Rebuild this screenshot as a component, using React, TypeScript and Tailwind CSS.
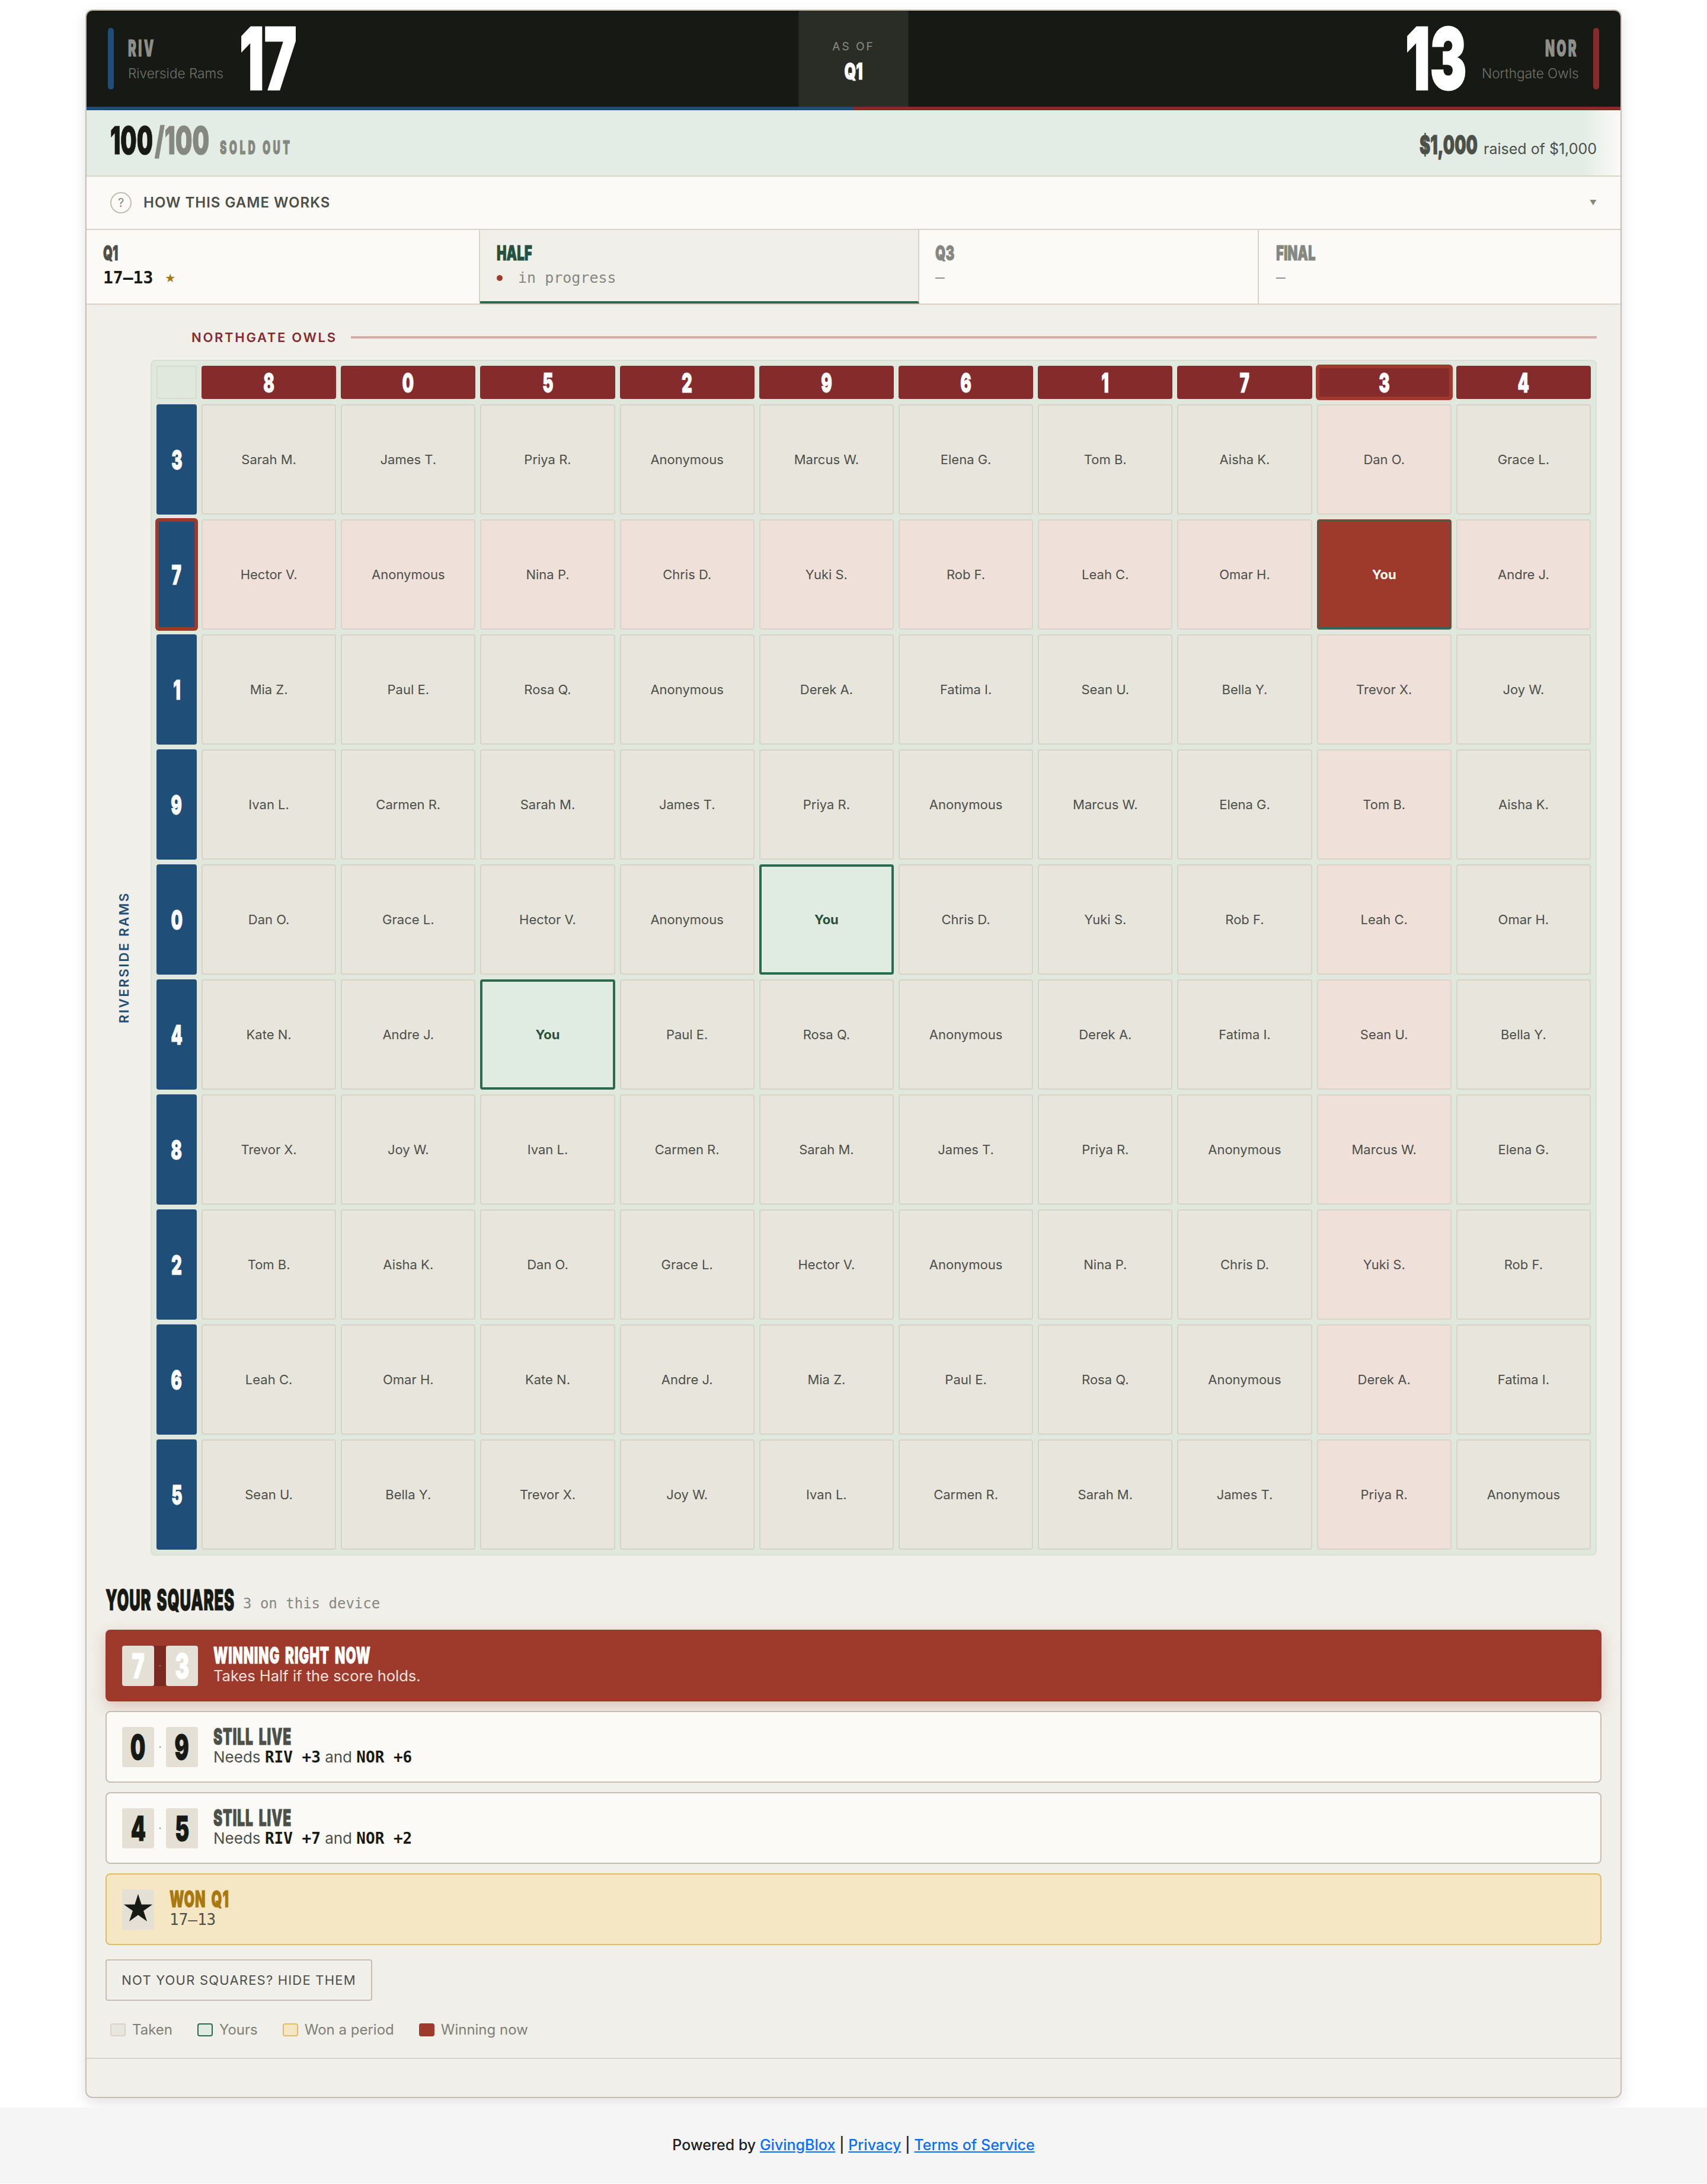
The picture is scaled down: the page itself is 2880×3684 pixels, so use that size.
const ANTON = "inline-block whitespace-nowrap font-['Inter'] font-black leading-none [-webkit-text-stroke:1px]"
const MONO = "font-['DejaVu_Sans_Mono']"

const AWAY = [8, 0, 5, 2, 9, 6, 1, 7, 3, 4]
const HOME = [3, 7, 1, 9, 0, 4, 8, 2, 6, 5]
const NAMES = [
  ['Sarah M.', 'James T.', 'Priya R.', 'Anonymous', 'Marcus W.', 'Elena G.', 'Tom B.', 'Aisha K.', 'Dan O.', 'Grace L.'],
  ['Hector V.', 'Anonymous', 'Nina P.', 'Chris D.', 'Yuki S.', 'Rob F.', 'Leah C.', 'Omar H.', 'You', 'Andre J.'],
  ['Mia Z.', 'Paul E.', 'Rosa Q.', 'Anonymous', 'Derek A.', 'Fatima I.', 'Sean U.', 'Bella Y.', 'Trevor X.', 'Joy W.'],
  ['Ivan L.', 'Carmen R.', 'Sarah M.', 'James T.', 'Priya R.', 'Anonymous', 'Marcus W.', 'Elena G.', 'Tom B.', 'Aisha K.'],
  ['Dan O.', 'Grace L.', 'Hector V.', 'Anonymous', 'You', 'Chris D.', 'Yuki S.', 'Rob F.', 'Leah C.', 'Omar H.'],
  ['Kate N.', 'Andre J.', 'You', 'Paul E.', 'Rosa Q.', 'Anonymous', 'Derek A.', 'Fatima I.', 'Sean U.', 'Bella Y.'],
  ['Trevor X.', 'Joy W.', 'Ivan L.', 'Carmen R.', 'Sarah M.', 'James T.', 'Priya R.', 'Anonymous', 'Marcus W.', 'Elena G.'],
  ['Tom B.', 'Aisha K.', 'Dan O.', 'Grace L.', 'Hector V.', 'Anonymous', 'Nina P.', 'Chris D.', 'Yuki S.', 'Rob F.'],
  ['Leah C.', 'Omar H.', 'Kate N.', 'Andre J.', 'Mia Z.', 'Paul E.', 'Rosa Q.', 'Anonymous', 'Derek A.', 'Fatima I.'],
  ['Sean U.', 'Bella Y.', 'Trevor X.', 'Joy W.', 'Ivan L.', 'Carmen R.', 'Sarah M.', 'James T.', 'Priya R.', 'Anonymous'],
]

function cellClass(r: number, c: number, name: string) {
  if (name === 'You' && r === 1) {
    return 'border border-[#9e3a2c] bg-[#9e3a2c] font-bold text-white shadow-[inset_0_0_0_3px_#2f6b50]'
  }
  if (name === 'You') return 'border-4 border-[#2a6a4f] bg-[#e0ebe2] font-bold text-[#25513f]'
  if (r === 1 || c === 8) return 'border-2 border-[#dcd3c9] bg-[#f0e0da] text-[#4c5049]'
  return 'border-2 border-[#d8d3c8] bg-[#e8e5dd] text-[#4c5049]'
}

function Board() {
  return (
    <div className="grid grid-cols-[68px_repeat(10,1fr)] grid-rows-[57px_repeat(10,186px)] gap-2 rounded-lg border-2 border-[#d6e0d4] bg-[#e0e8de] p-2">
      <div className="mb-px rounded border-2 border-[#d4dccf] bg-[#e0e8de]" />
      {AWAY.map((d, c) => (
        <div
          key={c}
          className={
            c === 8
              ? 'mb-px flex items-center justify-center rounded bg-[#862b2b] shadow-[0_0_0_2px_#9e3a2c,inset_0_0_0_4px_#9e3a2c]'
              : 'mb-px flex items-center justify-center rounded bg-[#862b2b]'
          }
        >
          <span className={`${ANTON} scale-x-[0.6] text-[46px] text-white`}>{d}</span>
        </div>
      ))}
      {HOME.map((d, r) => (
        <div key={d} className="contents">
          <div
            className={
              r === 1
                ? 'flex items-center justify-center rounded bg-[#1f4e79] shadow-[0_0_0_2px_#9e3a2c,inset_0_0_0_4px_#9e3a2c]'
                : 'flex items-center justify-center rounded bg-[#1f4e79]'
            }
          >
            <span className={`${ANTON} scale-x-[0.6] text-[46px] text-white`}>{d}</span>
          </div>
          {NAMES[r].map((name, c) => (
            <div key={c} className={`flex items-center justify-center rounded text-[22px] ${cellClass(r, c, name)}`}>
              {name}
            </div>
          ))}
        </div>
      ))}
    </div>
  )
}

function Tile({ d, win }: { d: string; win?: boolean }) {
  return (
    <div className="flex h-[68px] w-[54px] items-center justify-center rounded bg-[#e4e0d6]">
      <span className={`${ANTON} scale-x-[0.62] text-[58px] ${win ? 'text-white' : 'text-[#171a14]'}`}>{d}</span>
    </div>
  )
}

function Pair({ a, b, win }: { a: string; b: string; win?: boolean }) {
  return (
    <div className="flex shrink-0 items-stretch">
      <Tile d={a} win={win} />
      <div className={`flex w-5 items-center justify-center text-[18px] text-[#7d8076] ${win ? 'bg-[#7a2a20]' : ''}`}>·</div>
      <Tile d={b} win={win} />
    </div>
  )
}

function Needs({ riv, nor }: { riv: string; nor: string }) {
  const mono = `${MONO} font-bold text-[#171a14]`
  return (
    <div className="text-[26px] leading-[30px] text-[#4c5049]">
      Needs <span className={mono}>RIV {riv}</span> and <span className={mono}>NOR {nor}</span>
    </div>
  )
}

function Legend({ swatch, label }: { swatch: string; label: string }) {
  return (
    <div className="flex items-center gap-[11px]">
      <span className={`h-[22px] w-[26px] rounded ${swatch}`} />
      <span>{label}</span>
    </div>
  )
}

function Scoreboard() {
  return (
    <div className="relative flex h-[168px] items-stretch justify-between rounded-t-[10px] border-b-[6px] border-[#862b2b] bg-[#171a14]">
      {/* two tone rule under the score, blue half sits over the red border */}
      <div className="absolute bottom-[-6px] left-0 h-[6px] w-1/2 bg-[#1f4e79]" />
      <div className="flex items-center pl-[36px]">
        <div className="h-[104px] w-[10px] rounded-full bg-[#1f4e79]" />
        <div className="ml-[24px] w-[188px]">
          <span className={`${ANTON} origin-left scale-x-[0.55] text-[38px] tracking-[6px] text-[#8f908b]`}>RIV</span>
          <div className="mt-[10px] text-[22.6px] font-light leading-[26px] text-[#6f726a]">Riverside Rams</div>
        </div>
        <span className={`${ANTON} origin-left scale-x-[0.64] text-[144px] text-white [-webkit-text-stroke:3px]`}>17</span>
      </div>
      <div className="absolute inset-y-0 left-1/2 flex w-[185px] -translate-x-1/2 flex-col items-center justify-center bg-[#2a2c26] pt-[8px]">
        <span className="text-[19px] leading-[24px] tracking-[3px] text-[#8a8c85]">AS OF</span>
        <span className={`${ANTON} mt-[10px] scale-x-[0.66] text-[38px] text-white`}>Q1</span>
      </div>
      <div className="flex items-center pr-[36px]">
        <span className={`${ANTON} origin-right scale-x-[0.64] text-[144px] text-white [-webkit-text-stroke:3px]`}>13</span>
        <div className="ml-[26px] w-[163px] text-right">
          <span className={`${ANTON} origin-right scale-x-[0.55] text-[38px] tracking-[6px] text-[#8f908b]`}>NOR</span>
          <div className="mt-[10px] whitespace-nowrap text-[22.6px] font-light leading-[26px] text-[#6f726a]">Northgate Owls</div>
        </div>
        <div className="ml-[25px] h-[104px] w-[10px] rounded-full bg-[#862b2b]" />
      </div>
    </div>
  )
}

export default function App() {
  return (
    <div className="bg-white font-['Inter',sans-serif]">
      <div className="px-[144px] pb-4 pt-4">
        <div className="rounded-[12px] border-2 border-[#c4bdb0] bg-[#f1efe9] shadow-[0_8px_24px_rgba(0,0,0,0.12)]">
          <Scoreboard />

          {/* sold count */}
          <div className="flex h-[112px] items-center justify-between border-b-2 border-[#d8d3c8] bg-[linear-gradient(90deg,#e3ede5_97.6%,#fbfaf6)] pb-[8px] pl-[40px] pr-[40px]">
            <div className="flex items-baseline">
              <span className={`${ANTON} w-[75px] origin-left scale-x-[0.6] text-[64px] text-[#171a14]`}>100</span>
              <span className={`${ANTON} w-[110px] origin-left scale-x-[0.63] text-[64px] text-[#858880]`}>/100</span>
              <span className={`${ANTON} origin-left scale-x-[0.55] text-[31px] tracking-[8px] text-[#858880]`}>SOLD OUT</span>
            </div>
            <div className="flex items-baseline pt-[14px]">
              <span className={`${ANTON} w-[108px] origin-left scale-x-[0.62] text-[44px] text-[#4c5049]`}>$1,000</span>
              <span className="text-[25px] leading-[30px] text-[#4c5049]">raised of $1,000</span>
            </div>
          </div>

          {/* explainer toggle */}
          <div className="flex h-[90px] items-center justify-between border-b-2 border-[#d8d3c8] bg-[#fbfaf6] pl-[40px] pr-[40px]">
            <div className="flex items-center gap-5">
              <span className="flex h-[36px] w-[36px] items-center justify-center rounded-full border-2 border-[#c4bdb0] text-[20px] text-[#858880]">?</span>
              <span className="text-[24px] font-semibold tracking-[1px] text-[#4c5049]">HOW THIS GAME WORKS</span>
            </div>
            <span className="text-[12px] text-[#858880]">▼</span>
          </div>

          {/* periods */}
          <div className="grid h-[126px] grid-cols-[664px_741px_573px_1fr] border-b-2 border-[#d8d3c8] bg-[#fbfaf6]">
            <div className="border-r-2 border-[#d8d3c8] pl-[28px] pt-[22px]">
              <span className={`${ANTON} origin-left scale-x-[0.6] text-[34px] text-[#4c5049]`}>Q1</span>
              <div className={`${MONO} mt-[8px] flex items-center gap-5 text-[28px] font-bold leading-[32px] text-[#171a14]`}>
                17–13 <span className="font-['DejaVu_Sans'] text-[20px] font-normal text-[#a8780f]">★</span>
              </div>
            </div>
            <div className="border-b-4 border-r-2 border-b-[#2a6a4f] border-r-[#d8d3c8] bg-[#f1efe9] pl-[28px] pt-[22px]">
              <span className={`${ANTON} origin-left scale-x-[0.65] text-[34px] text-[#25513f]`}>HALF</span>
              <div className={`${MONO} mt-[8px] flex items-center gap-[26px] text-[25px] leading-[32px] text-[#858880]`}>
                <span className="h-[10px] w-[10px] rounded-full bg-[#9e3a2c]" />
                in progress
              </div>
            </div>
            <div className="border-r-2 border-[#d8d3c8] pl-[27px] pt-[22px]">
              <span className={`${ANTON} origin-left scale-x-[0.65] text-[34px] text-[#858880]`}>Q3</span>
              <div className={`${MONO} mt-[6px] text-[26px] leading-[32px] text-[#858880]`}>—</div>
            </div>
            <div className="pl-[29px] pt-[22px]">
              <span className={`${ANTON} origin-left scale-x-[0.65] text-[34px] text-[#858880]`}>FINAL</span>
              <div className={`${MONO} mt-[6px] text-[26px] leading-[32px] text-[#858880]`}>—</div>
            </div>
          </div>

          {/* board and your squares */}
          <div className="border-b-2 border-[#d8d3c8] px-[32px] pb-[32px] pt-[40px]">
            <div className="flex items-center gap-[23px] pl-[145px] pr-[8px]">
              <span className="whitespace-nowrap text-[22px] font-semibold leading-[30px] tracking-[2.7px] text-[#862b2b]">NORTHGATE OWLS</span>
              <div className="h-[4px] flex-1 bg-[#d4acaa]" />
            </div>
            <div className="mt-[23px] flex items-stretch pr-[8px]">
              <div className="flex w-[76px] items-center justify-center pr-[14px]">
                <span className="rotate-180 whitespace-nowrap text-[22px] font-semibold tracking-[2.7px] text-[#1f4e79] [writing-mode:vertical-rl]">RIVERSIDE RAMS</span>
              </div>
              <div className="flex-1">
                <Board />
              </div>
            </div>

            <div className="mt-[47px] flex h-[56px] items-center gap-5">
              <span className={`${ANTON} w-[212px] origin-left scale-x-[0.535] text-[48px] tracking-[1.5px] [word-spacing:6px] text-[#171a14]`}>YOUR SQUARES</span>
              <span className={`${MONO} mt-[12px] text-[24px] text-[#858880]`}>3 on this device</span>
            </div>

            <div className="mt-[22px] flex flex-col gap-4">
              <div className="flex h-[121px] items-center gap-[26px] rounded-lg bg-[#9e3a2c] pl-[28px] shadow-[0_8px_24px_rgba(158,58,44,0.25)]">
                <Pair a="7" b="3" win />
                <div className="pb-[4px]">
                  <span className={`${ANTON} origin-left scale-x-[0.59] text-[38px] tracking-[1.5px] [word-spacing:6px] text-white`}>WINNING RIGHT NOW</span>
                  <div className="text-[25.5px] leading-[30px] text-[#f1e3dc]">Takes Half if the score holds.</div>
                </div>
              </div>
              <div className="flex h-[121px] items-center gap-[26px] rounded-lg border-2 border-[#c4bdb0] bg-[#fbfaf6] pl-[26px]">
                <Pair a="0" b="9" />
                <div className="pb-[4px]">
                  <span className={`${ANTON} origin-left scale-x-[0.6] text-[38px] tracking-[1.5px] [word-spacing:6px] text-[#4c5049]`}>STILL LIVE</span>
                  <Needs riv="+3" nor="+6" />
                </div>
              </div>
              <div className="flex h-[121px] items-center gap-[26px] rounded-lg border-2 border-[#c4bdb0] bg-[#fbfaf6] pl-[26px]">
                <Pair a="4" b="5" />
                <div className="pb-[4px]">
                  <span className={`${ANTON} origin-left scale-x-[0.6] text-[38px] tracking-[1.5px] [word-spacing:6px] text-[#4c5049]`}>STILL LIVE</span>
                  <Needs riv="+7" nor="+2" />
                </div>
              </div>
              <div className="flex h-[121px] items-center gap-[26px] rounded-lg border-2 border-[#dfbd66] bg-[#f5e7c4] pl-[26px]">
                <div className="flex h-[68px] w-[54px] items-center justify-center rounded bg-[#e4e0d6] text-[56px] leading-none text-[#171a14]">★</div>
                <div className="pb-[4px]">
                  <span className={`${ANTON} origin-left scale-x-[0.6] text-[38px] tracking-[1.5px] [word-spacing:6px] text-[#a8780f]`}>WON Q1</span>
                  <div className={`${MONO} text-[26px] leading-[30px] text-[#4c5049]`}>17–13</div>
                </div>
              </div>
            </div>

            <button className="mt-[24px] block h-[70px] w-[450px] rounded border-2 border-[#c4bdb0] text-[22px] tracking-[1.2px] text-[#4c5049]">
              NOT YOUR SQUARES? HIDE THEM
            </button>

            <div className="mt-[34px] flex items-center gap-[42px] pl-[8px] text-[24px] leading-[30px] text-[#7d8076]">
              <Legend swatch="border-2 border-[#d8d3c8] bg-[#e8e5dd]" label="Taken" />
              <Legend swatch="border-2 border-[#2a6a4f] bg-[#e0ebe2]" label="Yours" />
              <Legend swatch="border-2 border-[#dfbd66] bg-[#f5e7c4]" label="Won a period" />
              <Legend swatch="bg-[#9e3a2c]" label="Winning now" />
            </div>
          </div>
          <div className="h-[64px]" />
        </div>
      </div>

      <footer className="flex h-[128px] items-center justify-center bg-[#f5f5f5] text-[25px] font-medium text-[#212121]">
        <span>
          Powered by <a className="text-[#0d6efd] underline">GivingBlox</a> | <a className="text-[#0d6efd] underline">Privacy</a> | <a className="text-[#0d6efd] underline">Terms of Service</a>
        </span>
      </footer>
    </div>
  )
}
